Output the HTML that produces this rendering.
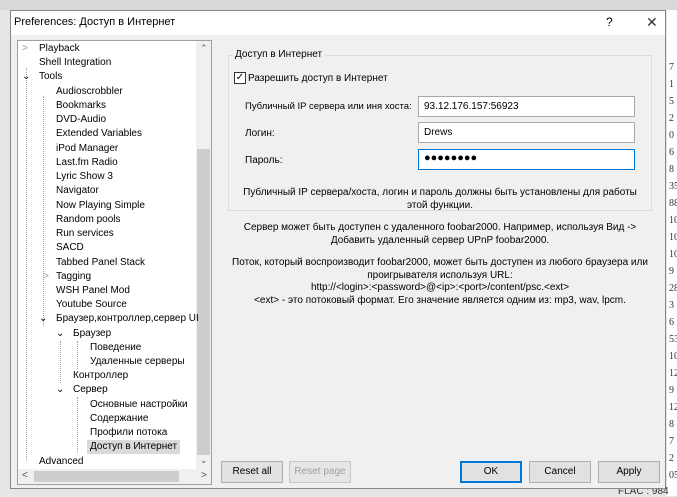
<html><head><style>
*{margin:0;padding:0;box-sizing:border-box}
body{width:677px;height:496px;background:#e6e6e6;position:relative;overflow:hidden;font-family:"Liberation Sans","DejaVu Sans",sans-serif;font-size:10px;color:#000}
.a{position:absolute;white-space:nowrap}
.dlg{position:absolute;left:10px;top:10px;width:656px;height:479px;background:#f0f0f0;border:1px solid #888}
.title{position:absolute;left:0;top:0;width:654px;height:24px;background:#fff;font-size:11px}
.tree{position:absolute;left:17px;top:40px;width:195px;height:445px;background:#fff;border:1px solid #a0a0a0}
.tr{position:absolute;font-size:10px;line-height:14px}
.inp{position:absolute;background:#fff;border:1px solid #a8a8a8;height:21px;padding:4px 5px;font-size:10px}
.btn{position:absolute;top:461px;height:22px;width:62px;background:#e1e1e1;border:1px solid #adadad;text-align:center;line-height:20px;font-size:10px}
.num{position:absolute;left:669px;font-size:10px;color:#333;font-family:"Liberation Serif",serif}
.c{text-align:center;line-height:12.5px;font-size:10px}
</style></head><body>
<div class="a" style="left:0;top:0;width:677px;height:10px;background:#d9d9d9"></div>
<div class="a" style="left:667px;top:10px;width:10px;height:486px;background:#fff"></div>
<div class="num" style="top:62px">7</div><div class="num" style="top:79px">1</div><div class="num" style="top:96px">5</div><div class="num" style="top:113px">2</div><div class="num" style="top:130px">0</div><div class="num" style="top:147px">6</div><div class="num" style="top:164px">8</div><div class="num" style="top:181px">35</div><div class="num" style="top:198px">88</div><div class="num" style="top:215px">10</div><div class="num" style="top:232px">10</div><div class="num" style="top:249px">10</div><div class="num" style="top:266px">9</div><div class="num" style="top:283px">28</div><div class="num" style="top:300px">3</div><div class="num" style="top:317px">6</div><div class="num" style="top:334px">53</div><div class="num" style="top:351px">10</div><div class="num" style="top:368px">12</div><div class="num" style="top:385px">9</div><div class="num" style="top:402px">12</div><div class="num" style="top:419px">8</div><div class="num" style="top:436px">7</div><div class="num" style="top:453px">2</div><div class="num" style="top:470px">05</div>
<div class="a" style="left:618px;top:486px;font-size:10px;color:#333">FLAC : 984</div>
<div class="dlg">
<div class="title"><span class="a" style="left:3px;top:5px">Preferences: Доступ в Интернет</span><span class="a" style="left:595px;top:4px;font-size:12px">?</span><span class="a" style="left:635px;top:3px;font-size:14px;color:#333">✕</span></div>
</div>
<div class="tree">
<div class="a" style="left:178px;top:0;width:15px;height:428px;background:#f0f0f0"></div>
<div class="a" style="left:179px;top:108px;width:13px;height:306px;background:#cdcdcd"></div>
<div class="a" style="left:182px;top:2px;font-size:9px;color:#555">⌃</div>
<div class="a" style="left:182px;top:414px;font-size:9px;color:#555">⌄</div>
<div class="a" style="left:0;top:428px;width:193px;height:15px;background:#f0f0f0"></div>
<div class="a" style="left:16px;top:430px;width:145px;height:11px;background:#cdcdcd"></div>
<div class="a" style="left:4px;top:429px;font-size:10px;color:#555">&lt;</div>
<div class="a" style="left:183px;top:429px;font-size:10px;color:#555">&gt;</div>
<div class="a" style="left:8px;top:27px;width:0;height:393px;border-left:1px dotted #a0a0a0"></div>
<div class="a" style="left:25px;top:55px;width:0;height:230px;border-left:1px dotted #a0a0a0"></div>
<div class="a" style="left:42px;top:300px;width:0;height:42px;border-left:1px dotted #a0a0a0"></div>
<div class="a" style="left:59px;top:300px;width:0;height:28px;border-left:1px dotted #a0a0a0"></div>
<div class="a" style="left:59px;top:356px;width:0;height:56px;border-left:1px dotted #a0a0a0"></div>
</div>
<div class="a" style="left:17px;top:41px">
<div class="tr" style="left:5px;top:1px;color:#999">&gt;</div><div class="tr" style="left:22px;top:1px">Playback</div>
<div class="tr" style="left:22px;top:15px">Shell Integration</div>
<div class="tr" style="left:5px;top:29px">⌄</div><div class="tr" style="left:22px;top:29px">Tools</div>
<div class="tr" style="left:39px;top:44px">Audioscrobbler</div>
<div class="tr" style="left:39px;top:58px">Bookmarks</div>
<div class="tr" style="left:39px;top:72px">DVD-Audio</div>
<div class="tr" style="left:39px;top:86px">Extended Variables</div>
<div class="tr" style="left:39px;top:101px">iPod Manager</div>
<div class="tr" style="left:39px;top:115px">Last.fm Radio</div>
<div class="tr" style="left:39px;top:129px">Lyric Show 3</div>
<div class="tr" style="left:39px;top:143px">Navigator</div>
<div class="tr" style="left:39px;top:158px">Now Playing Simple</div>
<div class="tr" style="left:39px;top:172px">Random pools</div>
<div class="tr" style="left:39px;top:186px">Run services</div>
<div class="tr" style="left:39px;top:200px">SACD</div>
<div class="tr" style="left:39px;top:215px">Tabbed Panel Stack</div>
<div class="tr" style="left:26px;top:229px;color:#999">&gt;</div><div class="tr" style="left:39px;top:229px">Tagging</div>
<div class="tr" style="left:39px;top:243px">WSH Panel Mod</div>
<div class="tr" style="left:39px;top:257px">Youtube Source</div>
<div class="tr" style="left:22px;top:271px">⌄</div><div class="tr" style="left:39px;top:271px">Браузер,контроллер,сервер UI</div>
<div class="tr" style="left:39px;top:286px">⌄</div><div class="tr" style="left:56px;top:286px">Браузер</div>
<div class="tr" style="left:73px;top:300px">Поведение</div>
<div class="tr" style="left:73px;top:314px">Удаленные серверы</div>
<div class="tr" style="left:56px;top:328px">Контроллер</div>
<div class="tr" style="left:39px;top:342px">⌄</div><div class="tr" style="left:56px;top:342px">Сервер</div>
<div class="tr" style="left:73px;top:357px">Основные настройки</div>
<div class="tr" style="left:73px;top:371px">Содержание</div>
<div class="tr" style="left:73px;top:385px">Профили потока</div>
<div class="tr" style="left:70px;top:399px;background:#d9d9d9;padding:0 3px">Доступ в Интернет</div>
<div class="tr" style="left:22px;top:414px">Advanced</div>
</div>
<div class="a" style="left:228px;top:55px;width:424px;height:156px;border:1px solid #dcdcdc"></div>
<div class="a" style="left:233px;top:49px;background:#f0f0f0;padding:0 2px">Доступ в Интернет</div>
<div class="a" style="left:234px;top:72px;width:12px;height:12px;border:1px solid #333;background:#fff;font-size:10px;line-height:10px;text-align:center">✓</div>
<div class="a" style="left:248px;top:73px">Разрешить доступ в Интернет</div>
<div class="a" style="left:245px;top:101px;font-size:9.5px">Публичный IP сервера или иня хоста:</div>
<div class="inp" style="left:418px;top:96px;width:217px">93.12.176.157:56923</div>
<div class="a" style="left:245px;top:128px">Логин:</div>
<div class="inp" style="left:418px;top:122px;width:217px">Drews</div>
<div class="a" style="left:245px;top:155px">Пароль:</div>
<div class="inp" style="left:418px;top:149px;width:217px;border-color:#0078d7;font-size:11px;padding-top:2px">●●●●●●●●</div>
<div class="a c" style="left:228px;top:187px;width:424px">Публичный IP сервера/хоста, логин и пароль должны быть установлены для работы<br>этой функции.</div>
<div class="a c" style="left:220px;top:222px;width:440px">Сервер может быть доступен с удаленного foobar2000. Например, используя Вид -&gt;<br>Добавить удаленный сервер UPnP foobar2000.</div>
<div class="a c" style="left:220px;top:257px;width:440px">Поток, который воспроизводит foobar2000, может быть доступен из любого браузера или<br>проигрывателя используя URL:<br>http://&lt;login&gt;:&lt;password&gt;@&lt;ip&gt;:&lt;port&gt;/content/psc.&lt;ext&gt;<br>&lt;ext&gt; - это потоковый формат. Его значение является одним из: mp3, wav, lpcm.</div>
<div class="btn" style="left:221px">Reset all</div>
<div class="btn" style="left:289px;color:#a0a0a0;border-color:#c8c8c8;background:#e6e6e6">Reset page</div>
<div class="btn" style="left:460px;border:2px solid #0078d7;line-height:18px">OK</div>
<div class="btn" style="left:529px">Cancel</div>
<div class="btn" style="left:598px">Apply</div>
</body></html>
